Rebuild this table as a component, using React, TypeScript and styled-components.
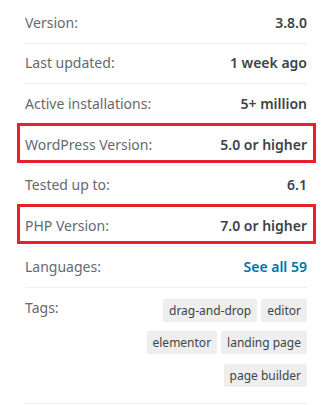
import React from "react";
import styled, { createGlobalStyle } from "styled-components";

const GlobalStyle = createGlobalStyle`
  html, body { margin: 0; padding: 0; background: #fff; }
  body { font-family: "Noto Sans", "Open Sans", sans-serif; }
`;

const Panel = styled.ul`
  list-style: none;
  margin: 0;
  padding: 3px 23px 0 25px;
  width: 282px;
`;

const Row = styled.li<{ $highlight?: boolean; $top?: boolean }>`
  position: relative;
  display: flex;
  justify-content: space-between;
  align-items: ${(p) => (p.$top ? "flex-start" : "center")};
  min-height: 40.67px;
  box-sizing: border-box;
  padding: ${(p) => (p.$top ? "10px 0 0" : "0")};
  border-bottom: 1px solid #eeeeee;
  font-size: 14px;
  line-height: 20px;
  ${(p) =>
    p.$highlight &&
    `
    &::after {
      content: "";
      position: absolute;
      left: -8px;
      right: -9px;
      top: -2px;
      bottom: 2px;
      border: 3.5px solid #e8202a;
      pointer-events: none;
    }
  `}
`;

const Label = styled.span`
  color: #646970;
`;

const Value = styled.strong`
  color: #3c434a;
  font-weight: 600;
`;

const LinkValue = styled.a`
  color: #0073aa;
  font-weight: 600;
  text-decoration: none;
`;

const TagList = styled.div`
  display: flex;
  flex-wrap: wrap;
  justify-content: flex-end;
  width: 166px;
  padding-top: 1px;
  padding-bottom: 7px;
`;

const Tag = styled.a`
  display: inline-block;
  margin: 0 0 9.5px 4px;
  padding: 0 6px;
  height: 23px;
  line-height: 23px;
  font-size: 12px;
  color: #3c434a;
  background: #eeeeee;
  border-radius: 2px;
  text-decoration: none;
`;

const rows: { label: string; value: string; highlight?: boolean }[] = [
  { label: "Version:", value: "3.8.0" },
  { label: "Last updated:", value: "1 week ago" },
  { label: "Active installations:", value: "5+ million" },
  { label: "WordPress Version:", value: "5.0 or higher", highlight: true },
  { label: "Tested up to:", value: "6.1" },
  { label: "PHP Version:", value: "7.0 or higher", highlight: true },
];

const tags = ["drag-and-drop", "editor", "elementor", "landing page", "page builder"];

export default function App() {
  return (
    <>
      <GlobalStyle />
      <Panel>
        {rows.map((r) => (
          <Row key={r.label} $highlight={r.highlight}>
            <Label>{r.label}</Label>
            <Value>{r.value}</Value>
          </Row>
        ))}
        <Row>
          <Label>Languages:</Label>
          <LinkValue href="#">See all 59</LinkValue>
        </Row>
        <Row $top>
          <Label>Tags:</Label>
          <TagList>
            {tags.map((t) => (
              <Tag key={t} href="#">
                {t}
              </Tag>
            ))}
          </TagList>
        </Row>
      </Panel>
    </>
  );
}
